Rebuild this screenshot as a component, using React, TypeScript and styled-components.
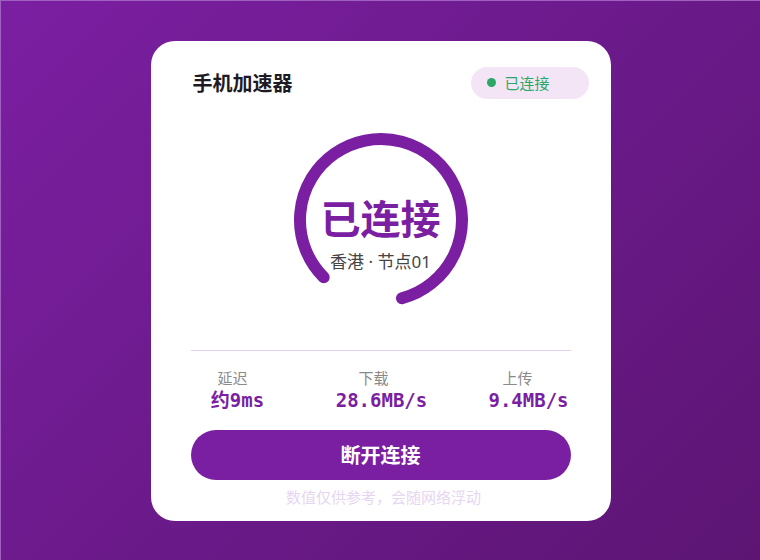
import styled, { createGlobalStyle } from 'styled-components';

const GlobalStyle = createGlobalStyle`
  html, body {
    margin: 0;
    padding: 0;
  }
  body {
    font-family: "Noto Sans CJK SC", "Noto Sans", sans-serif;
  }
`;

const Page = styled.div`
  width: 760px;
  height: 560px;
  box-sizing: border-box;
  display: flex;
  align-items: center;
  justify-content: center;
  background: linear-gradient(135deg, #7b1fa2 0%, #5c1573 100%);
  border-top: 1px solid #a060c0;
  border-left: 1px solid #a060c0;
`;

const Card = styled.div`
  width: 460px;
  height: 480px;
  box-sizing: border-box;
  background: #fff;
  border-radius: 24px;
  padding: 26px 22px 0 40px;
  display: flex;
  flex-direction: column;
`;

const Header = styled.div`
  display: flex;
  align-items: center;
  justify-content: space-between;
  height: 32px;
`;

const Title = styled.div`
  font-size: 20px;
  font-weight: 700;
  color: #1e1a24;
  padding-left: 2px;
`;

const Badge = styled.div`
  display: flex;
  align-items: center;
  gap: 9px;
  height: 32px;
  width: 118px;
  box-sizing: border-box;
  padding-left: 16px;
  border-radius: 16px;
  background: #f3e5f5;
  color: #2aa866;
  font-size: 15px;
`;

const Dot = styled.span`
  width: 9px;
  height: 9px;
  border-radius: 50%;
  background: #2aa866;
`;

const Body = styled.div`
  width: 380px;
  display: flex;
  flex-direction: column;
  align-items: center;
`;

const Gauge = styled.div`
  position: relative;
  width: 180px;
  height: 180px;
  margin-top: 31px;
`;

const GaugeText = styled.div`
  position: absolute;
  inset: 0;
  display: flex;
  flex-direction: column;
  align-items: center;
  justify-content: center;
  padding-top: 24px;
`;

const Status = styled.div`
  font-size: 40px;
  font-weight: 700;
  color: #7b1fa2;
  line-height: 52px;
`;

const Node = styled.div`
  font-family: "Noto Sans", "Noto Sans CJK SC", sans-serif;
  font-size: 17px;
  color: #444;
  line-height: 22px;
  margin-top: 8px;
  white-space: nowrap;
`;

const Divider = styled.div`
  width: 380px;
  height: 1px;
  background: #e6cff2;
  margin-top: 40px;
`;

const Stats = styled.div`
  display: grid;
  grid-template-columns: repeat(3, 146px);
  justify-content: center;
  width: 380px;
  margin-top: 17px;
`;

const Stat = styled.div<{ $shift: number }>`
  display: flex;
  flex-direction: column;
  align-items: center;
  transform: translateX(${p => p.$shift}px);
`;

const Label = styled.div<{ $offset: number }>`
  font-size: 15px;
  color: #8a8a8a;
  line-height: 20px;
  transform: translateX(${p => p.$offset}px);
`;

const Value = styled.div`
  font-family: "DejaVu Sans Mono", "Noto Sans CJK SC", monospace;
  font-size: 19px;
  font-weight: 700;
  color: #7b1fa2;
  line-height: 24px;
`;

const Button = styled.button`
  width: 380px;
  height: 50px;
  margin-top: 18px;
  border: none;
  border-radius: 25px;
  background: #7b1fa2;
  color: #fff;
  font-family: "Noto Sans CJK SC", sans-serif;
  font-size: 20px;
  font-weight: 700;
  cursor: pointer;
`;

const Note = styled.div`
  margin-top: 7px;
  font-size: 15px;
  color: #e6d6f1;
  line-height: 20px;
  transform: translateX(3px);
`;

function Ring() {
  const r = 81;
  const c = 90;
  const pt = (deg: number) => {
    const a = (deg * Math.PI) / 180;
    return `${(c + r * Math.cos(a)).toFixed(2)} ${(c + r * Math.sin(a)).toFixed(2)}`;
  };
  return (
    <svg width="180" height="180" viewBox="0 0 180 180">
      <path
        d={`M ${pt(135)} A ${r} ${r} 0 1 1 ${pt(75)}`}
        fill="none"
        stroke="#7b1fa2"
        strokeWidth="12"
        strokeLinecap="round"
      />
    </svg>
  );
}

const stats = [
  { label: '延迟', value: '约9ms', shift: 3, offset: -5 },
  { label: '下载', value: '28.6MB/s', shift: 1, offset: -8 },
  { label: '上传', value: '9.4MB/s', shift: 2, offset: -11 },
];

export default function App() {
  return (
    <>
      <GlobalStyle />
      <Page>
        <Card>
          <Header>
            <Title>手机加速器</Title>
            <Badge>
              <Dot />
              已连接
            </Badge>
          </Header>
          <Body>
            <Gauge>
              <Ring />
              <GaugeText>
                <Status>已连接</Status>
                <Node>香港 · 节点01</Node>
              </GaugeText>
            </Gauge>
            <Divider />
            <Stats>
              {stats.map(s => (
                <Stat key={s.label} $shift={s.shift}>
                  <Label $offset={s.offset}>{s.label}</Label>
                  <Value>{s.value}</Value>
                </Stat>
              ))}
            </Stats>
            <Button>断开连接</Button>
            <Note>数值仅供参考，会随网络浮动</Note>
          </Body>
        </Card>
      </Page>
    </>
  );
}
